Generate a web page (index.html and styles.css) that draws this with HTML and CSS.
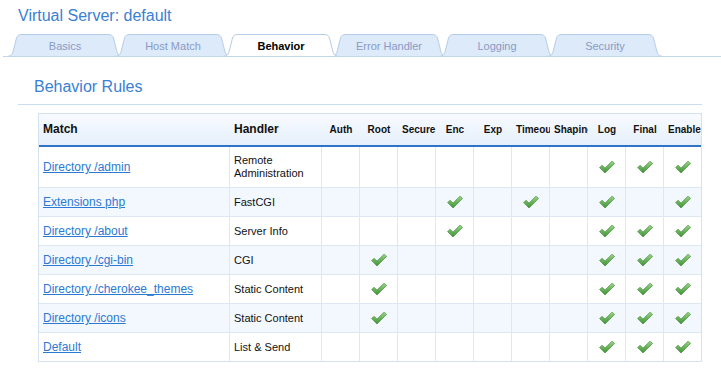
FILE: index.html
```html
<!DOCTYPE html>
<html>
<head>
<meta charset="utf-8">
<link rel="stylesheet" href="styles.css">
</head>
<body>
<h1 class="title">Virtual Server: default</h1>
<div class="tabs">
  <div class="tab"><svg class="tab-bg" viewBox="0 0 114 22"><path d="M0.5,22 C3.5,22 4.5,20 5.5,16 L8.5,4 C9.3,1.5 11,0.5 14,0.5 L100,0.5 C103,0.5 104.7,1.5 105.5,4 L108.5,16 C109.5,20 110.5,22 113.5,22"/></svg><span>Basics</span></div>
  <div class="tab"><svg class="tab-bg" viewBox="0 0 114 22"><path d="M0.5,22 C3.5,22 4.5,20 5.5,16 L8.5,4 C9.3,1.5 11,0.5 14,0.5 L100,0.5 C103,0.5 104.7,1.5 105.5,4 L108.5,16 C109.5,20 110.5,22 113.5,22"/></svg><span>Host Match</span></div>
  <div class="tab active"><svg class="tab-bg" viewBox="0 0 114 22"><path d="M0.5,22 C3.5,22 4.5,20 5.5,16 L8.5,4 C9.3,1.5 11,0.5 14,0.5 L100,0.5 C103,0.5 104.7,1.5 105.5,4 L108.5,16 C109.5,20 110.5,22 113.5,22"/></svg><span>Behavior</span></div>
  <div class="tab"><svg class="tab-bg" viewBox="0 0 114 22"><path d="M0.5,22 C3.5,22 4.5,20 5.5,16 L8.5,4 C9.3,1.5 11,0.5 14,0.5 L100,0.5 C103,0.5 104.7,1.5 105.5,4 L108.5,16 C109.5,20 110.5,22 113.5,22"/></svg><span>Error Handler</span></div>
  <div class="tab"><svg class="tab-bg" viewBox="0 0 114 22"><path d="M0.5,22 C3.5,22 4.5,20 5.5,16 L8.5,4 C9.3,1.5 11,0.5 14,0.5 L100,0.5 C103,0.5 104.7,1.5 105.5,4 L108.5,16 C109.5,20 110.5,22 113.5,22"/></svg><span>Logging</span></div>
  <div class="tab"><svg class="tab-bg" viewBox="0 0 114 22"><path d="M0.5,22 C3.5,22 4.5,20 5.5,16 L8.5,4 C9.3,1.5 11,0.5 14,0.5 L100,0.5 C103,0.5 104.7,1.5 105.5,4 L108.5,16 C109.5,20 110.5,22 113.5,22"/></svg><span>Security</span></div>
</div>

<div class="section">
  <h2 class="section-title">Behavior Rules</h2>
  <div class="rules">
    <div class="row head">
      <div class="c lft big">Match</div>
      <div class="c lft big">Handler</div>
      <div class="c">Auth</div>
      <div class="c">Root</div>
      <div class="c">Secure</div>
      <div class="c">Enc</div>
      <div class="c">Exp</div>
      <div class="c">Timeout</div>
      <div class="c">Shaping</div>
      <div class="c">Log</div>
      <div class="c">Final</div>
      <div class="c">Enable</div>
    </div>

    <div class="row body tall">
      <div class="c lft"><a href="#">Directory /admin</a></div>
      <div class="c lft hd">Remote Administration</div>
      <div class="c"></div><div class="c"></div><div class="c"></div><div class="c"></div><div class="c"></div><div class="c"></div><div class="c"></div>
      <div class="c"><svg class="chk" viewBox="0 0 16 12"><use href="#tick"/></svg></div>
      <div class="c"><svg class="chk" viewBox="0 0 16 12"><use href="#tick"/></svg></div>
      <div class="c"><svg class="chk" viewBox="0 0 16 12"><use href="#tick"/></svg></div>
    </div>

    <div class="row body alt">
      <div class="c lft"><a href="#">Extensions php</a></div>
      <div class="c lft hd">FastCGI</div>
      <div class="c"></div><div class="c"></div><div class="c"></div>
      <div class="c"><svg class="chk" viewBox="0 0 16 12"><use href="#tick"/></svg></div>
      <div class="c"></div>
      <div class="c"><svg class="chk" viewBox="0 0 16 12"><use href="#tick"/></svg></div>
      <div class="c"></div>
      <div class="c"><svg class="chk" viewBox="0 0 16 12"><use href="#tick"/></svg></div>
      <div class="c"></div>
      <div class="c"><svg class="chk" viewBox="0 0 16 12"><use href="#tick"/></svg></div>
    </div>

    <div class="row body">
      <div class="c lft"><a href="#">Directory /about</a></div>
      <div class="c lft hd">Server Info</div>
      <div class="c"></div><div class="c"></div><div class="c"></div>
      <div class="c"><svg class="chk" viewBox="0 0 16 12"><use href="#tick"/></svg></div>
      <div class="c"></div><div class="c"></div><div class="c"></div>
      <div class="c"><svg class="chk" viewBox="0 0 16 12"><use href="#tick"/></svg></div>
      <div class="c"><svg class="chk" viewBox="0 0 16 12"><use href="#tick"/></svg></div>
      <div class="c"><svg class="chk" viewBox="0 0 16 12"><use href="#tick"/></svg></div>
    </div>

    <div class="row body alt">
      <div class="c lft"><a href="#">Directory /cgi-bin</a></div>
      <div class="c lft hd">CGI</div>
      <div class="c"></div>
      <div class="c"><svg class="chk" viewBox="0 0 16 12"><use href="#tick"/></svg></div>
      <div class="c"></div><div class="c"></div><div class="c"></div><div class="c"></div><div class="c"></div>
      <div class="c"><svg class="chk" viewBox="0 0 16 12"><use href="#tick"/></svg></div>
      <div class="c"><svg class="chk" viewBox="0 0 16 12"><use href="#tick"/></svg></div>
      <div class="c"><svg class="chk" viewBox="0 0 16 12"><use href="#tick"/></svg></div>
    </div>

    <div class="row body">
      <div class="c lft"><a href="#">Directory /cherokee_themes</a></div>
      <div class="c lft hd">Static Content</div>
      <div class="c"></div>
      <div class="c"><svg class="chk" viewBox="0 0 16 12"><use href="#tick"/></svg></div>
      <div class="c"></div><div class="c"></div><div class="c"></div><div class="c"></div><div class="c"></div>
      <div class="c"><svg class="chk" viewBox="0 0 16 12"><use href="#tick"/></svg></div>
      <div class="c"><svg class="chk" viewBox="0 0 16 12"><use href="#tick"/></svg></div>
      <div class="c"><svg class="chk" viewBox="0 0 16 12"><use href="#tick"/></svg></div>
    </div>

    <div class="row body alt">
      <div class="c lft"><a href="#">Directory /icons</a></div>
      <div class="c lft hd">Static Content</div>
      <div class="c"></div>
      <div class="c"><svg class="chk" viewBox="0 0 16 12"><use href="#tick"/></svg></div>
      <div class="c"></div><div class="c"></div><div class="c"></div><div class="c"></div><div class="c"></div>
      <div class="c"><svg class="chk" viewBox="0 0 16 12"><use href="#tick"/></svg></div>
      <div class="c"><svg class="chk" viewBox="0 0 16 12"><use href="#tick"/></svg></div>
      <div class="c"><svg class="chk" viewBox="0 0 16 12"><use href="#tick"/></svg></div>
    </div>

    <div class="row body last">
      <div class="c lft"><a href="#">Default</a></div>
      <div class="c lft hd">List &amp; Send</div>
      <div class="c"></div><div class="c"></div><div class="c"></div><div class="c"></div><div class="c"></div><div class="c"></div><div class="c"></div>
      <div class="c"><svg class="chk" viewBox="0 0 16 12"><use href="#tick"/></svg></div>
      <div class="c"><svg class="chk" viewBox="0 0 16 12"><use href="#tick"/></svg></div>
      <div class="c"><svg class="chk" viewBox="0 0 16 12"><use href="#tick"/></svg></div>
    </div>
  </div>
</div>

<svg class="defs" width="0" height="0">
  <defs>
    <linearGradient id="g" x1="0" y1="0" x2="0" y2="1">
      <stop offset="0" stop-color="#9ad787"/>
      <stop offset="1" stop-color="#3f9236"/>
    </linearGradient>
    <polygon id="tick" points="0.6,6.6 3,4.2 6,7.1 13.2,0 15.6,2.4 6,12" fill="url(#g)" stroke="#3b8533" stroke-width="0.6" stroke-linejoin="round"/>
  </defs>
</svg>
</body>
</html>
```

FILE: styles.css
```css
html, body {
  margin: 0;
  padding: 0;
  background: #ffffff;
}

body {
  font-family: "Liberation Sans", Arial, sans-serif;
  color: #111;
}

.title {
  margin: 0;
  padding: 6px 0 0 18px;
  font-size: 16px;
  line-height: 20px;
  font-weight: normal;
  color: #3a80d3;
}

.tabs {
  display: flex;
  margin: 8px 0 0 3px;
  padding-left: 5px;
  border-bottom: 1px solid #c3d6ec;
  height: 22px;
}

.tab {
  position: relative;
  width: 114px;
  height: 22px;
  flex: none;
  box-sizing: border-box;
  padding-top: 5px;
  line-height: 14px;
  font-size: 11px;
  text-align: center;
  color: #8a9bc4;
}

.tab + .tab {
  margin-left: -6px;
}

.tab-bg {
  position: absolute;
  left: 0;
  top: 0;
  width: 114px;
  height: 22px;
  overflow: visible;
}

.tab-bg path {
  fill: #ddeafa;
  stroke: #b5cce8;
  stroke-width: 1;
}

.tab span {
  position: relative;
}

.tab.active {
  z-index: 2;
  color: #000;
  font-weight: bold;
}

.tab.active .tab-bg path {
  fill: #ffffff;
}

.section {
  margin: 20px 19px 0 18px;
}

.section-title {
  margin: 0;
  padding: 0 0 7px 16px;
  font-size: 16px;
  line-height: 20px;
  font-weight: normal;
  color: #3a80d3;
  border-bottom: 1px solid #c9dcf1;
}

.rules {
  margin: 8px 0 0 20px;
  width: 664px;
  box-sizing: border-box;
  border: 1px solid #d3e1f0;
}

.row {
  display: grid;
  grid-template-columns: 191px 92px repeat(9, 38px) 37px;
}

.c {
  box-sizing: border-box;
  padding: 0 4px;
  display: flex;
  align-items: center;
  justify-content: center;
  overflow: hidden;
  white-space: nowrap;
}

.c.lft {
  justify-content: flex-start;
}

.head {
  height: 33px;
  box-sizing: border-box;
  border-bottom: 2px solid #2f73c8;
  background: linear-gradient(#f8fbff, #e5effb);
}

.head .c {
  display: block;
  line-height: 31px;
  text-align: center;
  font-size: 10px;
  font-weight: bold;
  color: #111;
}

.head .c.lft {
  text-align: left;
}

.head .c.big {
  font-size: 12px;
}

.body {
  height: 29px;
  box-sizing: border-box;
  border-bottom: 1px solid #dde8f5;
}

.body.tall {
  height: 41px;
}

.body.alt {
  background: #f3f8fe;
}

.body.last {
  height: 28px;
  border-bottom: none;
}

.body .c {
  border-right: 1px solid #dde8f5;
}

.body .c:last-child {
  border-right: none;
}

.body a {
  font-size: 12px;
  color: #2c79d4;
  text-decoration: underline;
}

.hd {
  font-size: 11px;
  line-height: 13px;
  white-space: normal;
  color: #111;
}

.chk {
  width: 16px;
  height: 12px;
  display: block;
}

.defs {
  position: absolute;
  width: 0;
  height: 0;
}
```
